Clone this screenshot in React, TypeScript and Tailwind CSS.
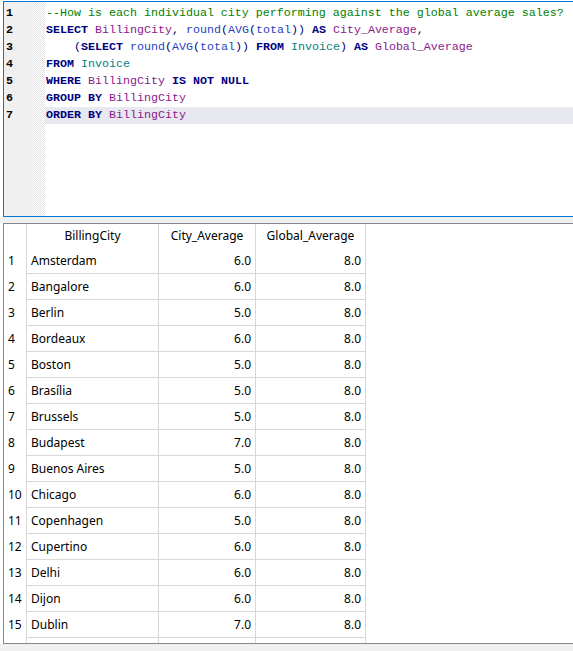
import React from "react";

type Tok = [string, string];

const KW = "text-[#00007f] font-bold";
const FN = "text-[#1f3fbf]";
const ID = "text-[#8b1a8b]";
const TB = "text-[#007f7f]";
const CM = "text-[#007f00]";
const PN = "text-[#00007f]";
const PL = "text-[#000000]";

const lines: Tok[][] = [
  [["--How is each individual city performing against the global average sales?", CM]],
  [
    ["SELECT", KW], [" ", PL], ["BillingCity", ID], [",", PN], [" ", PL], ["round", FN], ["(", PN], ["AVG", FN], ["(", PN], ["total", FN], ["))", PN], [" ", PL], ["AS", KW], [" ", PL], ["City_Average", ID], [",", PN],
  ],
  [
    ["    ", PL], ["(", PN], ["SELECT", KW], [" ", PL], ["round", FN], ["(", PN], ["AVG", FN], ["(", PN], ["total", FN], ["))", PN], [" ", PL], ["FROM", KW], [" ", PL], ["Invoice", TB], [")", PN], [" ", PL], ["AS", KW], [" ", PL], ["Global_Average", ID],
  ],
  [["FROM", KW], [" ", PL], ["Invoice", TB]],
  [["WHERE", KW], [" ", PL], ["BillingCity", ID], [" ", PL], ["IS", KW], [" ", PL], ["NOT", KW], [" ", PL], ["NULL", KW]],
  [["GROUP", KW], [" ", PL], ["BY", KW], [" ", PL], ["BillingCity", ID]],
  [["ORDER", KW], [" ", PL], ["BY", KW], [" ", PL], ["BillingCity", ID]],
];

const rows: [string, string, string][] = [
  ["Amsterdam", "6.0", "8.0"],
  ["Bangalore", "6.0", "8.0"],
  ["Berlin", "5.0", "8.0"],
  ["Bordeaux", "6.0", "8.0"],
  ["Boston", "5.0", "8.0"],
  ["Brasília", "5.0", "8.0"],
  ["Brussels", "5.0", "8.0"],
  ["Budapest", "7.0", "8.0"],
  ["Buenos Aires", "5.0", "8.0"],
  ["Chicago", "6.0", "8.0"],
  ["Copenhagen", "5.0", "8.0"],
  ["Cupertino", "6.0", "8.0"],
  ["Delhi", "6.0", "8.0"],
  ["Dijon", "6.0", "8.0"],
  ["Dublin", "7.0", "8.0"],
  ["", "", ""],
];

export default function App() {
  return (
    <div className="w-[573px] h-[651px] bg-white overflow-hidden flex flex-col">
      {/* Editor */}
      <div className="mt-[1px] ml-[3px] h-[216px] border border-r-0 border-[#0078d7] flex overflow-hidden shrink-0">
        <div className="w-[27px] bg-[#f0f0f0] pt-[3px] pl-[2px] font-['Liberation_Mono',monospace] text-[11.67px] font-bold text-[#000000]">
          {lines.map((_, i) => (
            <div key={i} className="h-[17px] leading-[17px]">{i + 1}</div>
          ))}
        </div>
        <div className="w-[14px] bg-[repeating-conic-gradient(#e4e4e4_0%_25%,#ffffff_0%_50%)] bg-[length:2px_2px]" />
        <div className="flex-1 pt-[3px] font-['Liberation_Mono',monospace] text-[11.67px] whitespace-pre">
          {lines.map((ln, i) => (
            <div key={i} className={`h-[17px] leading-[17px] pl-[1px] ${i === 6 ? "bg-[#e8e8f0]" : ""}`}>
              {ln.map((t, j) => (
                <span key={j} className={t[1]}>{t[0]}</span>
              ))}
            </div>
          ))}
        </div>
      </div>
      {/* Splitter */}
      <div className="h-[6px] bg-[#f0f0f0] shrink-0" />
      {/* Results */}
      <div className="ml-[3px] h-[421px] border border-r-0 border-[#828790] overflow-hidden shrink-0 bg-white font-['Noto_Sans',sans-serif] text-[12px] text-black">
        <div className="flex h-[24px] leading-[24px]">
          <div className="w-[23px] border-r border-[#d8d8d8]" />
          <div className="w-[132px] border-r border-[#d8d8d8] text-center">BillingCity</div>
          <div className="w-[97px] border-r border-[#d8d8d8] text-center">City_Average</div>
          <div className="w-[110px] border-r border-[#d8d8d8] text-center">Global_Average</div>
        </div>
        {rows.map((r, i) => (
          <div key={i} className="flex h-[26px]">
            <div className="w-[23px] border-r border-[#d8d8d8] pl-[4px] leading-[25px]">{r[0] ? i + 1 : ""}</div>
            <div className="w-[132px] border-r border-b border-[#d8d8d8] pl-[4px] leading-[25px]">{r[0]}</div>
            <div className="w-[97px] border-r border-b border-[#d8d8d8] pr-[4px] text-right leading-[25px]">{r[1]}</div>
            <div className="w-[110px] border-r border-b border-[#d8d8d8] pr-[4px] text-right leading-[25px]">{r[2]}</div>
          </div>
        ))}
      </div>
      <div className="flex-1 bg-[#f0f0f0]" />
    </div>
  );
}
